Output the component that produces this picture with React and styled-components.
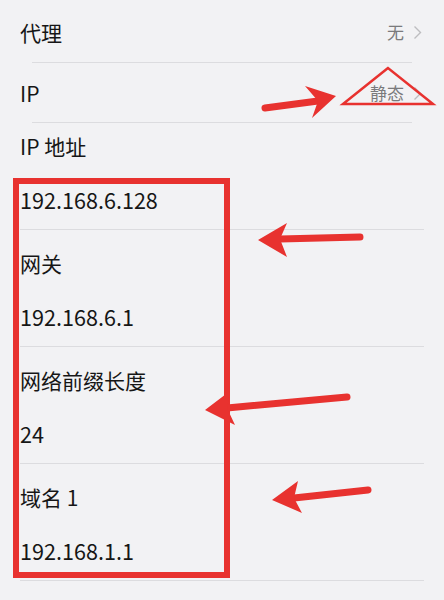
import React from "react";
import styled, { createGlobalStyle } from "styled-components";

const GlobalStyle = createGlobalStyle`
  html, body {
    margin: 0;
    padding: 0;
    background: #f2f2f4;
  }
  body {
    font-family: "Noto Sans CJK SC", "Noto Sans", sans-serif;
    color: #161616;
  }
`;

const Screen = styled.div`
  position: relative;
  width: 444px;
  height: 600px;
  overflow: hidden;
  background: #f2f2f4;
`;

const NavRow = styled.div`
  display: flex;
  align-items: center;
  justify-content: space-between;
  height: ${(p) => p.height}px;
  padding: ${(p) => p.drop}px 22px 0 20px;
  box-sizing: border-box;
`;

const Title = styled.span`
  font-size: 21px;
  line-height: 28px;
  color: #161616;
`;

const Trail = styled.span`
  display: flex;
  align-items: center;
  gap: 9px;
  font-size: 17px;
  line-height: 24px;
  color: #7a7a7c;
`;

const Divider = styled.div`
  height: 1px;
  background: #dcdcdf;
  margin: 0 ${(p) => (p.inset ? 32 : 20)}px;
`;

const Field = styled.div`
  display: flex;
  flex-direction: column;
  gap: 26px;
  padding: ${(p) => (p.compact ? 9 : 19)}px 20px 15px;
`;

const Label = styled.span`
  font-size: 21px;
  line-height: 28px;
  color: #161616;
`;

const Value = styled.span`
  font-size: 21.6px;
  line-height: 28px;
  color: #161616;
`;

const Marks = styled.svg`
  position: absolute;
  inset: 0;
  pointer-events: none;
`;

const Chevron = () => (
  <svg width="9" height="15" viewBox="0 0 9 15">
    <path d="M1.5 1.5 L7.5 7.5 L1.5 13.5" fill="none" stroke="#bdbdc0" strokeWidth="1.4" />
  </svg>
);

const RED = "#e8322f";

const arrows = [
  { tail: [265, 108], tip: [336, 96], w1: [305, 86], w2: [312, 118], notch: [318, 101] },
  { tail: [360, 237], tip: [258, 240], w1: [287, 223], w2: [287, 257], notch: [280, 239] },
  { tail: [347, 397], tip: [205, 410], w1: [230, 391], w2: [235, 425], notch: [227, 408] },
  { tail: [368, 490], tip: [272, 500], w1: [298, 481], w2: [302, 513], notch: [294, 498] },
];

const Arrow = ({ tail, tip, w1, w2, notch }) => (
  <g>
    <line
      x1={tail[0]}
      y1={tail[1]}
      x2={notch[0]}
      y2={notch[1]}
      stroke={RED}
      strokeWidth="7"
      strokeLinecap="round"
    />
    <polygon points={[tip, w1, notch, w2].map((p) => p.join(",")).join(" ")} fill={RED} />
  </g>
);

const fields = [
  { label: "IP 地址", value: "192.168.6.128", compact: true },
  { label: "网关", value: "192.168.6.1" },
  { label: "网络前缀长度", value: "24" },
  { label: "域名 1", value: "192.168.1.1" },
];

export default function App() {
  return (
    <>
      <GlobalStyle />
      <Screen>
        <NavRow height={62} drop={2}>
          <Title>代理</Title>
          <Trail>
            无 <Chevron />
          </Trail>
        </NavRow>
        <Divider inset />
        <NavRow height={59} drop={1}>
          <Title>IP</Title>
          <Trail>
            静态 <Chevron />
          </Trail>
        </NavRow>
        <Divider inset />
        {fields.map((f) => (
          <React.Fragment key={f.label}>
            <Field compact={f.compact}>
              <Label>{f.label}</Label>
              <Value>{f.value}</Value>
            </Field>
            <Divider />
          </React.Fragment>
        ))}

        <Marks width="444" height="600" viewBox="0 0 444 600">
          <rect x="16" y="181" width="211" height="394" fill="none" stroke={RED} strokeWidth="6" />
          <polygon points="388,68 343,104 433,104" fill="none" stroke={RED} strokeWidth="2.5" />
          {arrows.map((a, i) => (
            <Arrow key={i} {...a} />
          ))}
        </Marks>
      </Screen>
    </>
  );
}
